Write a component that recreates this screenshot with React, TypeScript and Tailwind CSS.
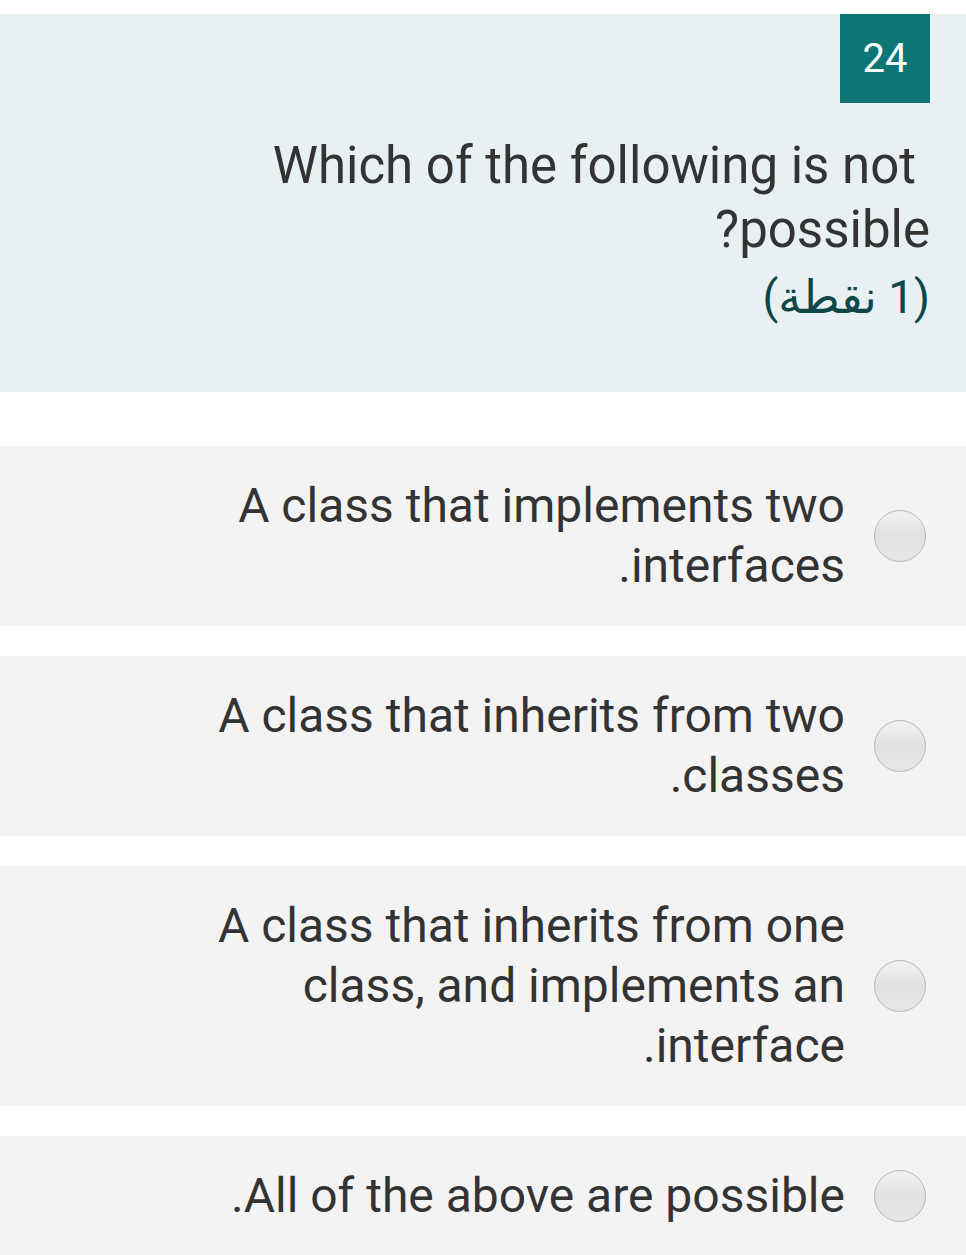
import React from "react";

const options = [
  "A class that implements two interfaces.",
  "A class that inherits from two classes.",
  "A class that inherits from one class, and implements an interface.",
  "All of the above are possible.",
];

function Radio() {
  return (
    <div className="w-[52px] h-[52px] shrink-0 rounded-full border border-[#b8b8b8] bg-[linear-gradient(to_bottom,#f2f2f2_0%,#e2e2e2_45%,#e6e6e6_100%)]" />
  );
}

export default function App() {
  return (
    <div
      className="w-[966px] bg-white pt-[14px] text-[#333333]"
      style={{ fontFamily: "Roboto, 'DejaVu Sans', sans-serif" }}
    >
      <div className="bg-[#e8f0f3] pr-[36px] pl-[40px] pb-[60px]">
        <div className="flex justify-end">
          <div className="w-[90px] h-[89px] bg-[#0e7575] text-white text-[40px] flex items-center justify-center">
            24
          </div>
        </div>
        <div dir="rtl" className="mt-[31px] text-[51px] leading-[64px] text-right">
          <div className="mr-[14px]">Which of the following is not</div>
          <div>possible?</div>
        </div>
        <div dir="rtl" className="text-[46px] leading-[70px] text-right text-[#0f4747]">
          (1 نقطة)
        </div>
      </div>
      <div className="mt-[54px] flex flex-col gap-[30px]">
        {options.map((o, i) => (
          <div key={i} className="bg-[#f3f3f3] py-[30px] pr-[40px] pl-[40px] flex items-center justify-end gap-[29px]">
            <div dir="rtl" className="text-[48px] leading-[60px] text-right max-w-[640px]">
              {o}
            </div>
            <Radio />
          </div>
        ))}
      </div>
    </div>
  );
}
